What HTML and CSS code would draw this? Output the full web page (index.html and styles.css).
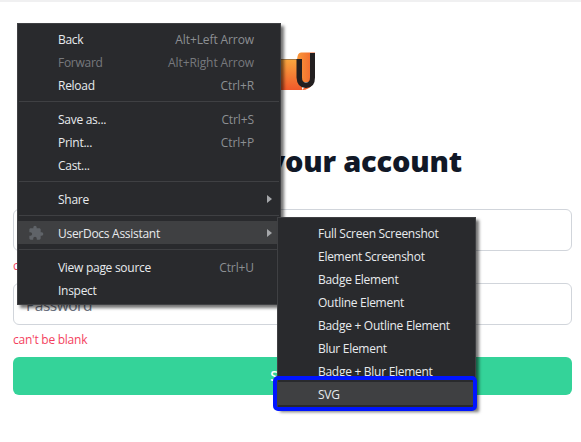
FILE: index.html
```html
<!DOCTYPE html>
<html lang="en">
<head>
<meta charset="utf-8">
<title>Sign in</title>
<link rel="stylesheet" href="styles.css">
</head>
<body>
<main class="page">
  <svg class="logo" width="60" height="40" viewBox="0 0 60 40">
    <defs><linearGradient id="flame" x1="0" y1="0" x2="0" y2="1"><stop offset="0" stop-color="#f9a63f"/><stop offset="1" stop-color="#f1592a"/></linearGradient>
    <linearGradient id="flame-side" x1="0" y1="0" x2="1" y2="0"><stop offset="0" stop-color="#f9983a"/><stop offset="1" stop-color="#f1602c"/></linearGradient></defs>
    <path d="M0 7.500H46V38H0Z" fill="url(#flame)"/>
    <path d="M0 7.500H41" stroke="#a77943" fill="none"/>
    <path d="M41 7.500Q41.500 .5 45 .5H59V7H54V30H46V7.500Z" fill="url(#flame-side)"/>
    <path d="M46 38Q53 38 56.500 32L50 34Z" fill="#f1622d"/>
    <path d="M40.500 7H46V25.500Q46 30.500 50 30.500T54 25.500V1H59V25.500Q59 36 50 36T40.500 25.500Z" fill="#231f20"/>
  </svg>
  <h1 class="title">Sign in to your account</h1>
  <form class="form">
    <div class="field">Email address</div>
    <p class="error">can't be blank</p>
    <div class="field">Password</div>
    <p class="error">can't be blank</p>
    <div class="submit">Sign in</div>
  </form>
</main>

<nav class="menu menu-main">
  <div class="item"><span>Back</span><span class="key">Alt+Left Arrow</span></div>
  <div class="item disabled"><span>Forward</span><span class="key">Alt+Right Arrow</span></div>
  <div class="item"><span>Reload</span><span class="key">Ctrl+R</span></div>
  <div class="separator"></div>
  <div class="item"><span>Save as...</span><span class="key">Ctrl+S</span></div>
  <div class="item"><span>Print...</span><span class="key">Ctrl+P</span></div>
  <div class="item"><span>Cast...</span></div>
  <div class="separator"></div>
  <div class="item parent"><span>Share</span></div>
  <div class="separator"></div>
  <div class="item parent active">
    <svg class="puzzle" width="16" height="16" viewBox="0 0 24 24"><path d="M20.500 11H19V7c0-1.100-.9-2-2-2h-4V3.500a2.500 2.500 0 0 0-5 0V5H4c-1.100 0-2 .9-2 2v3.800h1.500a2.700 2.700 0 0 1 0 5.400H2V20c0 1.100.9 2 2 2h3.800v-1.500a2.700 2.700 0 0 1 5.400 0V22H17c1.100 0 2-.9 2-2v-4h1.500a2.500 2.500 0 0 0 0-5z"/></svg>
    <span>UserDocs Assistant</span>
  </div>
  <div class="separator"></div>
  <div class="item"><span>View page source</span><span class="key">Ctrl+U</span></div>
  <div class="item"><span>Inspect</span></div>
</nav>

<nav class="menu menu-sub">
  <div class="item">Full Screen Screenshot</div>
  <div class="item">Element Screenshot</div>
  <div class="item">Badge Element</div>
  <div class="item">Outline Element</div>
  <div class="item">Badge + Outline Element</div>
  <div class="item">Blur Element</div>
  <div class="item">Badge + Blur Element</div>
  <div class="item active">SVG</div>
</nav>
<div class="outline"></div>
</body>
</html>
```

FILE: styles.css
```css
* { box-sizing: border-box; }
body {
  margin: 0;
  height: 442px;
  overflow: hidden;
  background: #fff;
  font-family: "Open Sans", "Noto Sans", sans-serif;
}
.page {
  height: 442px;
  border-top: 2px solid #f0f0f1;
  padding: 50px 9px 0 13px;
  display: flex;
  flex-direction: column;
}
.logo { display: block; margin-left: 243px; }
.title {
  margin: 51px 0 0;
  height: 36px;
  line-height: 36px;
  font-size: 29px;
  font-weight: 800;
  letter-spacing: -0.2px;
  text-align: center;
  white-space: nowrap;
  color: #111827;
}
.form { margin-top: 30px; }
.field {
  height: 42px;
  border: 1px solid #d1d5db;
  border-radius: 6px;
  padding: 0 12px;
  font-size: 15.5px;
  letter-spacing: -0.5px;
  line-height: 42px;
  color: #6b7280;
}
.error {
  margin: 0;
  height: 32px;
  line-height: 29px;
  font-size: 12px;
  letter-spacing: -0.25px;
  color: #f43f5e;
}
.submit {
  height: 38px;
  border-radius: 6px;
  background: #34d399;
  color: #fff;
  font-size: 14px;
  font-weight: 600;
  line-height: 38px;
  text-align: center;
}
.menu {
  position: absolute;
  padding: 3px 0;
  border: 1px solid #3f4043;
  background: #292a2d;
  box-shadow: 3px 3px 3px rgba(0, 0, 0, .55);
  color: #e8eaed;
  font-size: 12px;
  letter-spacing: -0.28px;
}
.menu-main { left: 17px; top: 23px; width: 264px; }
.menu-sub { left: 277px; top: 217px; width: 199px; }
.item {
  position: relative;
  display: flex;
  justify-content: space-between;
  height: 23px;
  padding: 0 26px 0 40px;
  line-height: 26px;
  white-space: nowrap;
}
.key { color: #8c8f93; letter-spacing: -0.1px; }
.disabled, .disabled .key { color: #77797d; }
.active { background: #3f4042; }
.parent::after {
  content: "";
  position: absolute;
  right: 8px;
  top: 8px;
  border: solid transparent;
  border-width: 4.5px 0 4.5px 5px;
  border-left-color: #a5a7aa;
}
.puzzle { position: absolute; left: 10px; top: 4px; fill: #5f6368; }
.separator { height: 11px; padding: 5px 1px; }
.separator::before { content: ""; display: block; height: 1px; background: #3f4043; }
.outline {
  position: absolute;
  left: 273px;
  top: 376px;
  width: 204px;
  height: 35px;
  border: 4px solid #0015ff;
  border-radius: 5px;
}
```
